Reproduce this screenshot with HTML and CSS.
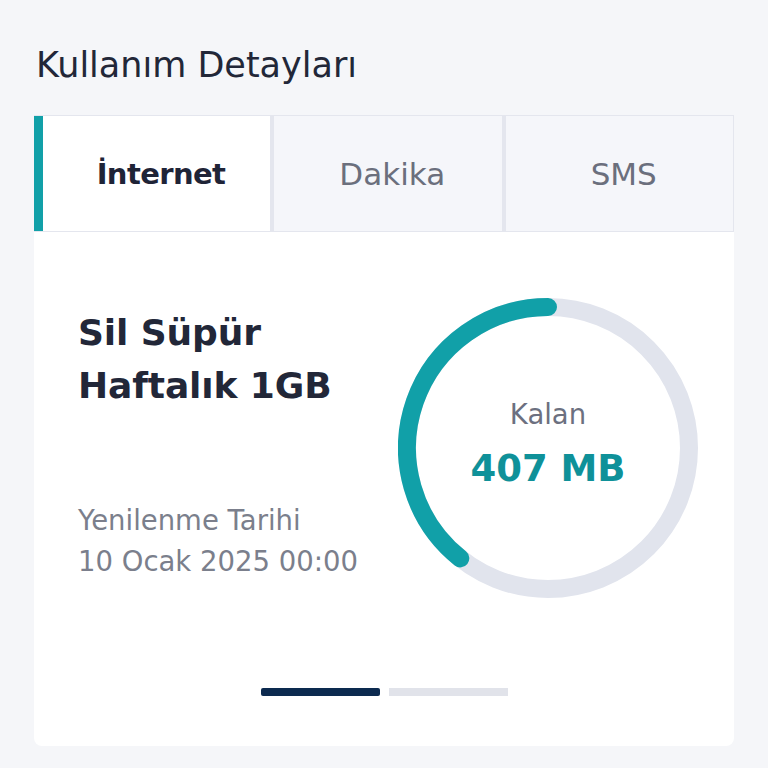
FILE: index.html
```html
<!DOCTYPE html>
<html lang="tr">
<head>
<meta charset="utf-8">
<link rel="stylesheet" href="styles.css">
</head>
<body>
<main class="page">
  <h1 class="title">Kullanım Detayları</h1>
  <div class="tabs">
    <div class="tab tab-active">İnternet</div>
    <div class="tab">Dakika</div>
    <div class="tab">SMS</div>
  </div>
  <section class="card">
    <div class="card-body">
      <div class="info">
        <h2 class="package">Sil Süpür<br>Haftalık 1GB</h2>
        <div class="renew">
          <div>Yenilenme Tarihi</div>
          <div>10 Ocak 2025 00:00</div>
        </div>
      </div>
      <div class="gauge">
        <svg class="ring" width="300" height="300" viewBox="0 0 300 300">
          <circle cx="150" cy="150" r="141" fill="none" stroke="#e1e4ed" stroke-width="18"/>
          <path d="M150 9 A141 141 0 0 0 62.3 260.4" fill="none" stroke="#11a0a8" stroke-width="18" stroke-linecap="round"/>
        </svg>
        <div class="gauge-text">
          <div class="gauge-label">Kalan</div>
          <div class="gauge-value">407 MB</div>
        </div>
      </div>
    </div>
    <div class="dots">
      <span class="dot dot-active"></span>
      <span class="dot"></span>
    </div>
  </section>
</main>
</body>
</html>
```
FILE: styles.css
```css
html, body {
  margin: 0;
  padding: 0;
  background: #f5f6f9;
}
body {
  font-family: "DejaVu Sans", "Noto Sans", sans-serif;
  color: #222738;
}
.page {
  width: 700px;
  margin: 0 0 0 34px;
  padding-top: 43px;
}
.title {
  margin: 0 0 0 2px;
  font-size: 35px;
  font-weight: 400;
  line-height: 44px;
  color: #222738;
}
.tabs {
  margin-top: 28px;
  display: grid;
  grid-template-columns: 236px 1fr 1fr;
  gap: 4px;
  background: #e4e6ee;
  padding: 1px 1px 1px 0;
}
.tab {
  height: 115px;
  padding-left: 9px;
  display: flex;
  align-items: center;
  justify-content: center;
  background: #f5f6fa;
  font-size: 31px;
  color: #6b6f7d;
}
.tab-active {
  background: #ffffff;
  border-left: 9px solid #11a0a8;
  font-size: 29px;
  letter-spacing: -0.6px;
  font-weight: 700;
  color: #1f2437;
}
.card {
  background: #ffffff;
  border-radius: 0 0 8px 8px;
  height: 514px;
  display: flex;
  flex-direction: column;
}
.card-body {
  display: flex;
  padding: 66px 36px 0 44px;
}
.info {
  flex: 1;
  display: flex;
  flex-direction: column;
}
.package {
  margin: 8px 0 0 0;
  font-size: 36px;
  font-weight: 700;
  letter-spacing: -0.1px;
  line-height: 53px;
  color: #222738;
}
.renew {
  margin-top: 88px;
  font-size: 27.5px;
  line-height: 41px;
  color: #7b7f8c;
}
.gauge {
  position: relative;
  width: 300px;
  height: 300px;
}
.ring {
  display: block;
}
.gauge-text {
  position: absolute;
  inset: 0;
  padding-top: 96px;
  display: flex;
  flex-direction: column;
  align-items: center;
}
.gauge-label {
  font-size: 27.5px;
  line-height: 40px;
  color: #6c7080;
}
.gauge-value {
  margin-top: 9px;
  font-size: 37px;
  font-weight: 700;
  line-height: 52px;
  color: #0f9199;
}
.dots {
  margin-top: 90px;
  display: flex;
  justify-content: center;
  gap: 9px;
}
.dot {
  width: 119px;
  height: 8px;
  background: #e1e3ea;
}
.dot-active {
  background: #0c2a4f;
  border-radius: 2px;
}
```
